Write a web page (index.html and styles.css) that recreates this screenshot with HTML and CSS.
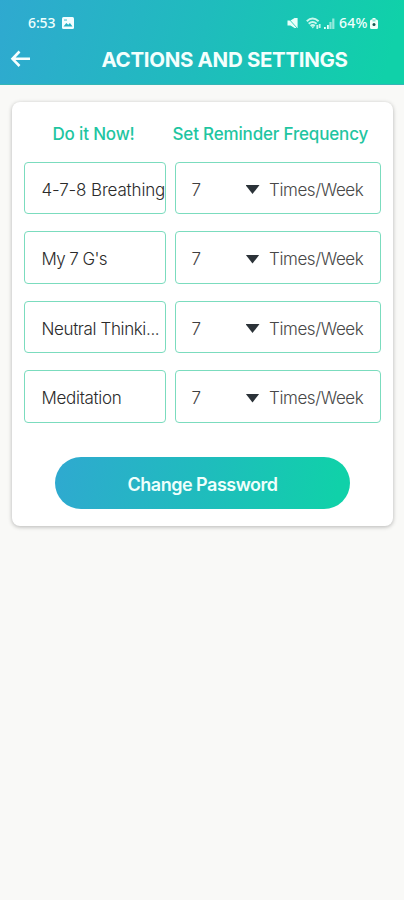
FILE: index.html
```html
<!DOCTYPE html>
<html lang="en">
<head>
<meta charset="utf-8">
<title>Actions and Settings</title>
<link rel="stylesheet" href="styles.css">
</head>
<body>
<header class="header">
  <div class="status">
    <span class="time">6:53</span>
    <svg class="photo" width="12" height="12" viewBox="0 0 12 12"><rect width="12" height="12" rx="1.5" fill="#f2fdff"/><path d="M1.5 9.500l2.800-3.500 2 1.800 1.600-1.700 2.600 3.400z" fill="#27b2c5"/><path d="M2 2.300h3v1.500H2z" fill="#27b2c5" opacity=".6"/></svg>
    <span class="spacer"></span>
    <svg class="mute" width="12" height="12" viewBox="0 0 12 12" fill="#e9fffa"><path d="M.5 3.500h3L8 .8v10.400L3.500 8.500h-3z"/><path d="M9.300 1v10" stroke="#e9fffa" stroke-width="2.600"/><path d="M1 1l9 10" stroke="#16c9b3" stroke-width=".8"/></svg>
    <svg class="wifi" width="16" height="13" viewBox="0 0 16 13" fill="none" stroke="#c8f7ec" stroke-width="2"><path d="M.8 4.200Q6.500-1.200 12.600 4.200"/><path d="M2.700 6.700Q6.600 3.200 10.600 6.700"/><path d="M4.600 9Q6.700 7.200 8.800 9"/><path d="M5.300 9.500h3l-1.500 2z" fill="#c8f7ec" stroke="none"/><path d="M11.300 8v4M13.700 7v4" stroke-width="1.800"/></svg>
    <svg class="signal" width="11" height="11" viewBox="0 0 11 11" fill="#e9fffa"><path d="M0 9h1.800v2H0zM3 7h1.800v4H3z"/><path d="M5.400 4h2.200v7H5.400zM8.200.5h2.200V11H8.200z" opacity=".6"/></svg>
    <span class="percent">64%</span>
    <svg class="battery" width="8" height="11" viewBox="0 0 8 11"><path d="M2.500 0h3v1.500h1Q8 1.500 8 3v6.500Q8 11 6.500 11h-5Q0 11 0 9.500V3q0-1.500 1.500-1.500h1z" fill="#f2fffb"/><path d="M2.500 1.500h3v2h-3z" fill="#8be5d2"/><circle cx="4" cy="6.600" r="1.500" fill="#14594f"/></svg>
  </div>
  <div class="bar">
    <svg class="back" width="20" height="18" viewBox="0 0 20 18" fill="none" stroke="#f6ffff" stroke-width="2.600"><path d="M9.500 1.500L2.500 8.800l7 7.200M2.500 8.800H20"/></svg>
    <h1 class="title">ACTIONS AND SETTINGS</h1>
  </div>
</header>
<main class="card">
  <div class="row heads">
    <h2 class="head now">Do it Now!</h2>
    <h2 class="head freq">Set Reminder Frequency</h2>
  </div>
  <div class="rows">
    <div class="row"><div class="box name"><span class="breathing">4-7-8 Breathing</span></div><div class="box select"><span class="num">7</span><i class="caret"></i><span class="unit">Times/Week</span></div></div>
    <div class="row"><div class="box name"><span class="gs">My 7 G's</span></div><div class="box select"><span class="num">7</span><i class="caret"></i><span class="unit">Times/Week</span></div></div>
    <div class="row"><div class="box name"><span class="neutral">Neutral Thinki...</span></div><div class="box select"><span class="num">7</span><i class="caret"></i><span class="unit">Times/Week</span></div></div>
    <div class="row"><div class="box name"><span class="meditation">Meditation</span></div><div class="box select"><span class="num">7</span><i class="caret"></i><span class="unit">Times/Week</span></div></div>
  </div>
  <button class="button">Change Password</button>
</main>
</body>
</html>
```
FILE: styles.css
```css
* { box-sizing: border-box; }
body { margin: 0; min-height: 900px; background: #f9f9f7; font-family: Inter, sans-serif; color: #2b2b2b; }
svg { display: block; flex: none; }
.header { height: 85px; background: linear-gradient(105deg, #2fa9d0 0%, #1fbcbd 50%, #10d1a9 95%); border-bottom: 1px solid #35b5b5; }
.status { height: 46px; padding: 0 26px 0 28px; display: flex; align-items: center; color: #f0fffd; }
.time, .percent { font: 500 14px/18px "Noto Sans", sans-serif; margin-top: -1px; }
.time { width: 28px; letter-spacing: -.1px; }
.photo { margin-left: 6px; }
.spacer { flex: 1; }
.wifi { margin-left: 7px; }
.signal { margin-left: 2px; }
.percent { margin-left: 4px; width: 31px; letter-spacing: .3px; }
.battery { margin-top: 1px; }
.bar { height: 26px; display: flex; align-items: center; }
.back { margin-left: 10px; }
.title { margin: 1px 0 0 71.500px; font-size: 20.500px; line-height: 26px; font-weight: 650; letter-spacing: -.33px; color: #f4fffd; white-space: nowrap; }
.card { width: 381.500px; height: 424px; margin: 17px 0 0 11.500px; padding: 20px 12px 0; background: #fff; border-radius: 8px; box-shadow: 0 1px 4px rgba(0,0,0,.28); }
.row { display: grid; grid-template-columns: 142px 206.500px; column-gap: 9px; }
.heads { height: 40px; }
.head { margin: 0; font-size: 17px; line-height: 25px; font-weight: 500; letter-spacing: -.17px; color: #1fc5a1; white-space: nowrap; }
.now { padding-left: 29px; }
.freq { margin-left: -2px; }
.rows { display: grid; row-gap: 17.300px; }
.box { height: 52.200px; border: 1px solid #7bdcbe; border-radius: 4px; display: flex; align-items: center; font-size: 17px; font-weight: 300; padding-top: 3px; white-space: nowrap; }
.name { padding-left: 17px; }
.breathing { letter-spacing: -.15px; }
.gs { letter-spacing: -.6px; }
.neutral { letter-spacing: -.38px; }
.meditation { letter-spacing: -.3px; }
.num { width: 54px; margin-left: 16px; color: #404040; }
.caret { width: 14px; height: 9px; background: #2b3238; clip-path: polygon(0 0, 100% 0, 50% 100%); }
.unit { margin-left: 9.500px; letter-spacing: -.4px; color: #484848; }
.button { display: block; width: 295px; height: 51.500px; margin: 34.500px 0 0 31.500px; padding: 3px 0 0; border: 0; border-radius: 26px; background: linear-gradient(100deg, #2fa9d0 0%, #1fbcbd 50%, #10d1a9 95%); color: #effffc; font: 600 18px Inter, sans-serif; letter-spacing: -.5px; }
```
